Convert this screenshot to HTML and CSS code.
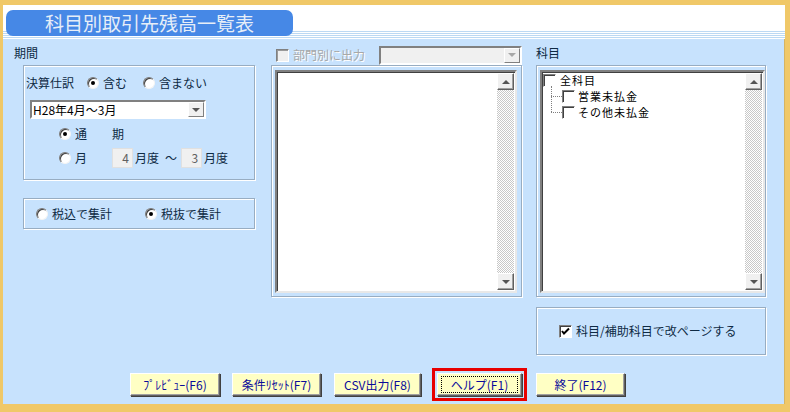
FILE: index.html
```html
<!DOCTYPE html>
<html lang="ja">
<head>
  <meta charset="UTF-8">
  <title>科目別取引先残高一覧表</title>
  <link rel="stylesheet" href="styles.css">
</head>
<body>
  <div class="frame">
    <header class="titlebar">
      <div class="title-pill">科目別取引先残高一覧表</div>
    </header>

    <div class="main">
      <div class="col-left">
        <div class="label">期間</div>
        <div class="panel period">
          <div class="row row-kessan">
            <span class="txt">決算仕訳</span>
            <span class="radio on r1"></span><span class="txt">含む</span>
            <span class="radio r2"></span><span class="txt">含まない</span>
          </div>
          <div class="select">
            <span class="select-val">H28年4月～3月</span>
            <span class="drop"><span class="tri"></span></span>
          </div>
          <div class="row row-tsuki">
            <span class="radio on"></span><span class="txt">通</span>
            <span class="txt gap-ki">期</span>
          </div>
          <div class="row row-month">
            <span class="radio"></span><span class="txt">月</span>
            <span class="num n1">4</span><span class="txt">月度</span>
            <span class="txt tilde">～</span>
            <span class="num n2">3</span><span class="txt">月度</span>
          </div>
        </div>
        <div class="panel tax">
          <span class="radio"></span><span class="txt w-tax">税込で集計</span>
          <span class="radio on r-tax2"></span><span class="txt">税抜で集計</span>
        </div>
      </div>

      <div class="col-mid">
        <div class="mid-top">
          <span class="check disabled"></span>
          <span class="txt grayed">部門別に出力</span>
          <div class="combo"><span class="drop"><span class="tri light"></span></span></div>
        </div>
        <div class="panel listwrap">
          <div class="list">
            <div class="list-body"></div>
            <div class="scroll">
              <span class="sbtn"><span class="tri up"></span></span>
              <span class="track"></span>
              <span class="sbtn"><span class="tri"></span></span>
            </div>
          </div>
        </div>
      </div>

      <div class="col-right">
        <div class="label">科目</div>
        <div class="panel listwrap">
          <div class="list">
            <div class="list-body tree">
              <div class="node root"><span class="check"></span><span class="txt">全科目</span></div>
              <div class="children">
                <div class="node child"><span class="hline"></span><span class="check"></span><span class="txt">営業未払金</span></div>
                <div class="node child"><span class="hline"></span><span class="check"></span><span class="txt">その他未払金</span></div>
              </div>
            </div>
            <div class="scroll">
              <span class="sbtn"><span class="tri up"></span></span>
              <span class="track"></span>
              <span class="sbtn"><span class="tri"></span></span>
            </div>
          </div>
        </div>
        <div class="panel pagebreak">
          <span class="check on">
            <svg width="9" height="9" viewBox="0 0 9 9"><path d="M1 4 L3 6.5 L8 1.5" fill="none" stroke="#000" stroke-width="2"/></svg>
          </span>
          <span class="txt">科目/補助科目で改ページする</span>
        </div>
      </div>
    </div>

    <div class="buttons">
      <button class="fbtn b1">ﾌﾟﾚﾋﾞｭｰ(F6)</button>
      <button class="fbtn b2">条件ﾘｾｯﾄ(F7)</button>
      <button class="fbtn b3">CSV出力(F8)</button>
      <div class="focus-ring">
        <button class="fbtn b4"><span class="focus-dots">ヘルプ(F1)</span></button>
      </div>
      <button class="fbtn b5">終了(F12)</button>
    </div>
  </div>
</body>
</html>
```

FILE: styles.css
```css
* {
  margin: 0;
  padding: 0;
  box-sizing: border-box;
}
body {
  font-family: "Noto Sans CJK JP", "Noto Sans", sans-serif;
  font-size: 12px;
  color: #0e2a44;
  background: #f0c868;
}
.frame {
  width: 790px;
  height: 412px;
  border-style: solid;
  border-color: #f0c868;
  border-width: 5px 5px 8px 3px;
  background: #c7e2fd;
  box-shadow: inset -1px 0 #d6b462;
}
.titlebar {
  height: 34px;
  padding: 5px 0 0 3px;
  background: linear-gradient(to bottom,
    #fff 0 26px, #bcd9f3 26px 27px, #fff 27px 28px, #bcd9f3 28px 29px,
    #fff 29px 30px, #bcd9f3 30px 31px, #fff 31px 32px, #bcd9f3 32px 33px, #fff 33px 34px);
}
.title-pill {
  width: 287px;
  height: 26px;
  border-radius: 7px;
  background: #4688e6;
  color: #e6eef8;
  font-size: 19px;
  line-height: 26px;
  text-align: center;
}
.main {
  display: flex;
  padding: 6px 0 0 11px;
}
.label {
  height: 20px;
  line-height: 14px;
  padding-top: 1px;
}
.txt {
  line-height: 16px;
  white-space: nowrap;
}
.panel {
  border: 1px solid #98adc2;
  box-shadow: 1px 1px 0 #fff, inset 1px 1px 0 #fff;
}

/* left column */
.col-left {
  width: 240px;
}
.period {
  width: 232px;
  margin-left: 9px;
  height: 115px;
  padding: 9px 0 0 2px;
}
.row {
  display: flex;
  align-items: center;
  height: 16px;
}
.radio {
  position: relative;
  display: inline-block;
  width: 12px;
  height: 12px;
  border-radius: 50%;
  background: #fff;
  border: 1px solid;
  border-color: #7a7a7a #f4f4f4 #f4f4f4 #7a7a7a;
  box-shadow: inset 1px 1px 0 #404040;
  flex: none;
  margin-right: 4px;
}
.radio.on::after {
  content: "";
  position: absolute;
  left: 3px;
  top: 3px;
  width: 4px;
  height: 4px;
  border-radius: 50%;
  background: #000;
}
.r1 { margin-left: 13px; }
.r2 { margin-left: 16px; }
.select {
  display: flex;
  width: 176px;
  height: 19px;
  margin: 9px 0 0 4px;
  background: #fff;
  border: 2px solid;
  border-color: #808080 #fff #fff #808080;
}
.select-val {
  flex: 1;
  line-height: 15px;
  padding-left: 1px;
  color: #000;
}
.drop {
  width: 16px;
  display: flex;
  align-items: center;
  justify-content: center;
  background: #f0f0f0;
  border: 1px solid;
  border-color: #fff #808080 #808080 #fff;
}
.tri {
  width: 0;
  height: 0;
  border-left: 4px solid transparent;
  border-right: 4px solid transparent;
  border-top: 4px solid #555;
}
.tri.up {
  border-top: none;
  border-bottom: 4px solid #555;
}
.tri.light {
  border-top-color: #a8a8a8;
}
.row-tsuki {
  margin: 7px 0 0 33px;
}
.gap-ki { margin-left: 25px; }
.row-month {
  height: 20px;
  margin: 6px 0 0 33px;
}
.num {
  width: 21px;
  height: 20px;
  margin-left: 25px;
  margin-right: 2px;
  background: #f0f0f0;
  border: 1px solid #e0e0e0;
  color: #606060;
  text-align: right;
  padding-right: 3px;
  line-height: 18px;
}
.n2 { margin-left: 4px; }
.tilde { margin-left: 6px; }
.tax {
  display: flex;
  align-items: center;
  width: 232px;
  height: 31px;
  margin: 18px 0 0 9px;
  padding-left: 12px;
}
.w-tax { width: 60px; }
.r-tax2 { margin-left: 33px; }

/* middle column */
.col-mid {
  width: 251px;
  margin-left: 17px;
}
.mid-top {
  display: flex;
  align-items: center;
  height: 20px;
  padding-left: 5px;
}
.check {
  display: inline-flex;
  align-items: center;
  justify-content: center;
  width: 13px;
  height: 13px;
  flex: none;
  background: #fff;
  border: 1px solid;
  border-color: #808080 #fff #fff #808080;
  box-shadow: inset 1px 1px 0 #404040;
  margin-right: 4px;
}
.check.disabled {
  background: #f0f0f0;
  box-shadow: inset 1px 1px 0 #9a9a9a;
}
.grayed {
  color: #a8a8a8;
  text-shadow: 1px 1px 0 #fff;
}
.combo {
  display: flex;
  justify-content: flex-end;
  width: 145px;
  height: 19px;
  margin-left: 14px;
  background: #f0f0f0;
  border: 2px solid;
  border-color: #808080 #fff #fff #808080;
}
.listwrap {
  height: 232px;
  padding: 4px 0 0 3px;
}
.list {
  display: flex;
  width: 242px;
  height: 223px;
  background: #fff;
  border: 2px solid;
  border-color: #808080 #e8e8e8 #e8e8e8 #808080;
  box-shadow: inset 1px 1px 0 #404040;
}
.list-body {
  flex: 1;
}
.scroll {
  display: flex;
  flex-direction: column;
  width: 17px;
  margin: 1px 1px 1px 0;
}
.sbtn {
  display: flex;
  align-items: center;
  justify-content: center;
  height: 17px;
  background: #f0f0f0;
  border: 1px solid;
  border-color: #fff #606060 #606060 #fff;
  box-shadow: inset -1px -1px 0 #a0a0a0;
}
.track {
  flex: 1;
  background: repeating-conic-gradient(#c8c8c8 0 25%, #fff 0 50%) 0 0 / 2px 2px;
}

/* right column */
.col-right {
  width: 230px;
  margin-left: 14px;
}
.col-right .list {
  width: 225px;
}
.col-right .listwrap {
  padding-left: 3px;
}
.tree {
  padding: 0 0 0 1px;
  color: #000;
}
.node {
  display: flex;
  align-items: center;
  height: 16px;
}
.tree .txt {
  font-size: 11px;
  letter-spacing: 1px;
  line-height: 16px;
}
.root .check { margin-right: 4px; }
.children {
  position: relative;
  margin-left: 8px;
}
.children::before {
  content: "";
  position: absolute;
  left: 0;
  top: -2px;
  height: 26px;
  border-left: 1px dotted #808080;
}
.hline {
  width: 11px;
  border-top: 1px dotted #808080;
}
.child .check { margin-right: 3px; }
.pagebreak {
  display: flex;
  align-items: center;
  height: 48px;
  margin-top: 10px;
  padding-left: 22px;
}
.check.on svg { display: block; }

/* buttons */
.buttons {
  display: flex;
  align-items: center;
  height: 27px;
  margin-top: 16px;
  padding-left: 127px;
}
.fbtn {
  height: 23px;
  font-family: "Noto Sans CJK JP", sans-serif;
  font-size: 12px;
  color: #0a0a9a;
  background: #ffffc4;
  border: 1px solid;
  border-color: #fff #606060 #606060 #fff;
  box-shadow: inset -1px -1px 0 #a0a0a0, 1px 1px 0 #404040;
}
.b1 { width: 90px; }
.b2 { width: 89px; margin-left: 12px; }
.b3 { width: 87px; margin-left: 13px; }
.focus-ring {
  margin-left: 11px;
  padding: 2px;
  border: 3px solid #e80000;
}
.b4 { width: 85px; padding: 2px 3px; }
.focus-dots {
  display: block;
  height: 17px;
  line-height: 15px;
  border: 1px dotted #000;
}
.b5 { width: 89px; margin-left: 9px; }
```
